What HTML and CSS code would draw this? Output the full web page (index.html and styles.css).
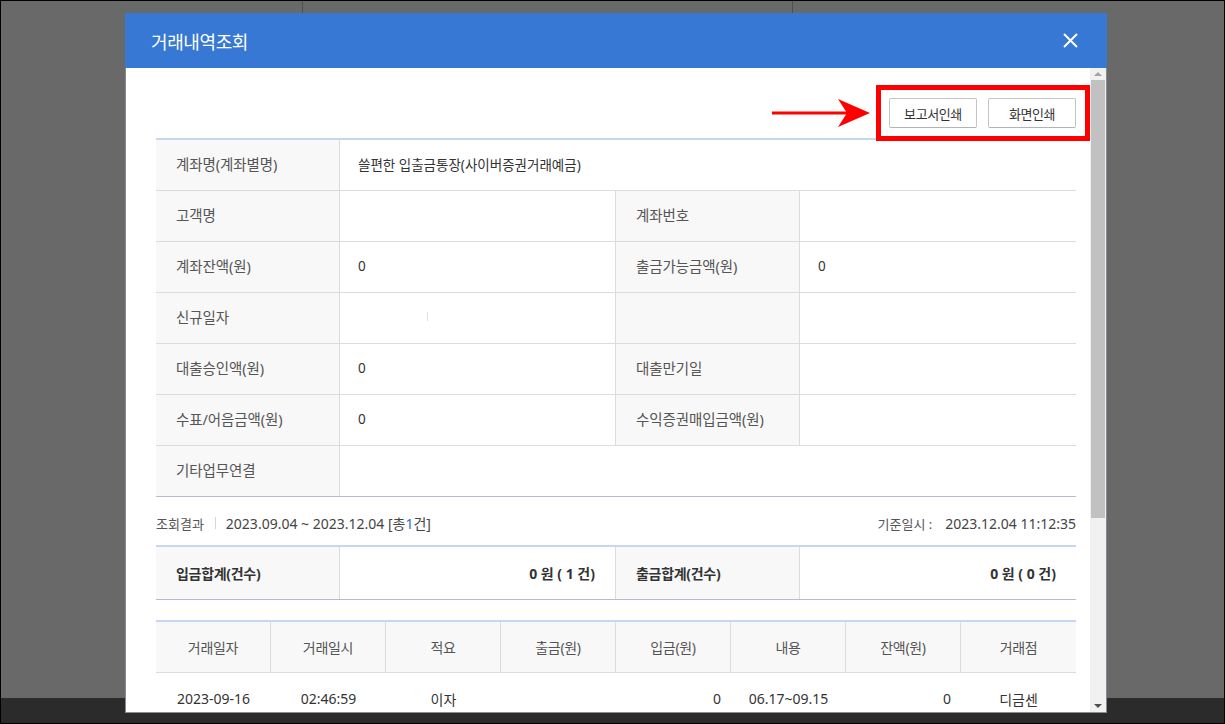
FILE: index.html
```html
<!DOCTYPE html>
<html lang="ko">
<head>
<meta charset="utf-8">
<title>거래내역조회</title>
<link rel="stylesheet" href="styles.css">
</head>
<body>
<div class="screen">
  <div class="bd-cols">
    <div class="bd-col"></div>
    <div class="bd-col"></div>
    <div class="bd-col"></div>
  </div>
  <div class="bd-bottom"></div>

  <div class="modal">
    <div class="modal-head">
      <h1 class="modal-title">거래내역조회</h1>
      <span class="close">
        <svg width="15" height="15" viewBox="0 0 15 15"><path d="M1 1L14 14M14 1L1 14" stroke="#fff" stroke-width="2" fill="none"/></svg>
      </span>
    </div>
    <div class="modal-body">
      <div class="content">
        <div class="btn-row">
          <svg class="annot-arrow" width="102" height="32" viewBox="0 0 102 32">
            <rect x="2" y="14.5" width="78" height="3" fill="#f00"/>
            <polygon points="68,2 100,16 68,30 77,16" fill="#f00"/>
          </svg>
          <span class="btn">보고서인쇄</span>
          <span class="btn">화면인쇄</span>
          <span class="annot-box"></span>
        </div>

        <div class="info">
          <div class="c th">계좌명(계좌별명)</div>
          <div class="c td span3 end">쓸편한 입출금통장(사이버증권거래예금)</div>

          <div class="c th">고객명</div>
          <div class="c td"></div>
          <div class="c th">계좌번호</div>
          <div class="c td end"></div>

          <div class="c th">계좌잔액(원)</div>
          <div class="c td">0</div>
          <div class="c th">출금가능금액(원)</div>
          <div class="c td end">0</div>

          <div class="c th">신규일자</div>
          <div class="c td"><span class="mark"></span></div>
          <div class="c th"></div>
          <div class="c td end"></div>

          <div class="c th">대출승인액(원)</div>
          <div class="c td">0</div>
          <div class="c th">대출만기일</div>
          <div class="c td end"></div>

          <div class="c th">수표/어음금액(원)</div>
          <div class="c td">0</div>
          <div class="c th">수익증권매입금액(원)</div>
          <div class="c td end"></div>

          <div class="c th lastrow">기타업무연결</div>
          <div class="c td span3 end lastrow"></div>
        </div>

        <div class="result">
          <div class="result-left">
            <span class="lbl">조회결과</span><span class="sep"></span><span class="val">2023.09.04 ~ 2023.12.04 [총<em>1</em>건]</span>
          </div>
          <div class="result-right">
            <span class="lbl">기준일시 :</span><span class="val stamp">2023.12.04 11:12:35</span>
          </div>
        </div>

        <div class="sum">
          <div class="s sth">입금합계(건수)</div>
          <div class="s std">0 원 ( 1 건)</div>
          <div class="s sth">출금합계(건수)</div>
          <div class="s std end">0 원 ( 0 건)</div>
        </div>

        <div class="tx">
          <div class="h">거래일자</div>
          <div class="h">거래일시</div>
          <div class="h">적요</div>
          <div class="h">출금(원)</div>
          <div class="h">입금(원)</div>
          <div class="h">내용</div>
          <div class="h">잔액(원)</div>
          <div class="h end">거래점</div>

          <div class="d">2023-09-16</div>
          <div class="d">02:46:59</div>
          <div class="d">이자</div>
          <div class="d num"></div>
          <div class="d num">0</div>
          <div class="d">06.17~09.15</div>
          <div class="d num">0</div>
          <div class="d">디금센</div>
        </div>
      </div>
      <div class="scrollbar">
        <span class="sb-btn"><span class="tri up"></span></span>
        <div class="sb-track"><div class="sb-thumb"></div></div>
        <span class="sb-btn"><span class="tri down"></span></span>
      </div>
    </div>
  </div>
</div>
</body>
</html>
```

FILE: styles.css
```css
* { box-sizing: border-box; }
html, body { margin: 0; padding: 0; }
body {
  width: 1225px;
  height: 724px;
  overflow: hidden;
  font-family: "Noto Sans", "Noto Sans CJK KR", sans-serif;
  background: #696969;
}
.screen {
  position: relative;
  width: 1225px;
  height: 724px;
  border: 1px solid #000;
  background: #696969;
  display: flex;
  flex-direction: column;
}
.bd-cols {
  flex: 1;
  display: grid;
  grid-template-columns: 302px 490px 1fr;
}
.bd-col { border-right: 1px solid #4f4f4f; }
.bd-col:last-child { border-right: none; }
.bd-bottom { height: 25px; background: #2b2b2b; }

/* modal */
.modal {
  position: absolute;
  left: 124px;
  top: 12px;
  width: 982px;
  height: 700px;
  background: #fff;
  border: 1px solid #868c95;
  border-top: none;
  display: flex;
  flex-direction: column;
}
.modal-head {
  height: 55px;
  margin: 0 -1px;
  background: #3678d3;
  display: flex;
  align-items: center;
  justify-content: space-between;
  padding: 0 29px 0 26px;
  flex: none;
}
.modal-title {
  margin: 0;
  font-size: 18px;
  font-weight: 400;
  color: #fff;
  letter-spacing: -0.4px;
}
.close { display: flex; width: 15px; height: 15px; }

.modal-body {
  flex: 1;
  min-height: 0;
  display: flex;
}
.content {
  flex: 1;
  min-width: 0;
  padding: 30px 14px 0 30px;
  overflow: hidden;
}

/* buttons */
.btn-row {
  position: relative;
  height: 30px;
  margin-bottom: 10px;
  display: flex;
  justify-content: flex-end;
  gap: 11px;
}
.btn {
  height: 30px;
  min-width: 88px;
  padding: 0 14px;
  border: 1px solid #c4c4c4;
  border-bottom-color: #b3b3b3;
  border-radius: 2px;
  background: #fff;
  font-size: 13px;
  letter-spacing: -0.4px;
  color: #333;
  display: flex;
  align-items: center;
  justify-content: center;
}
.annot-box {
  position: absolute;
  right: -14px;
  top: -13px;
  width: 214px;
  height: 56px;
  border: 5px solid #ff0000;
}
.annot-arrow {
  position: absolute;
  left: 614px;
  top: -1px;
}

/* info grid */
.info {
  display: grid;
  grid-template-columns: 184px 276px 184px 276px;
  border-top: 2px solid #c7d7ef;
  border-bottom: 1px solid #b6bbcf;
}
.c {
  height: 51px;
  padding-bottom: 3px;
  border-bottom: 1px solid #dcdcdc;
  border-right: 1px solid #dcdcdc;
  display: flex;
  align-items: center;
}
.c.end { border-right: none; }
.c.lastrow { border-bottom: none; height: 50px; }
.span3 { grid-column: span 3; }
.th {
  background: #f8f8f8;
  padding-left: 20px;
  font-size: 14.5px;
  letter-spacing: -0.1px;
  color: #555;
}
.td {
  padding-left: 18px;
  font-size: 13.5px;
  color: #333;
}
.mark {
  display: block;
  width: 1px;
  height: 9px;
  margin-left: 69px;
  background: #d3e5f6;
}

/* result line */
.result {
  height: 48px;
  padding-top: 4px;
  display: flex;
  justify-content: space-between;
  align-items: center;
}
.result-left, .result-right { display: flex; align-items: center; }
.lbl { font-size: 13px; color: #555; }
.sep { width: 1px; height: 12px; background: #d6d6d6; margin: 0 10px 0 11px; }
.val { font-size: 14px; color: #444; }
.val em { font-style: normal; color: #2f6bd0; }
.stamp { margin-left: 13px; }

/* summary */
.sum {
  display: grid;
  grid-template-columns: 184px 276px 184px 276px;
  border-top: 2px solid #c7d7ef;
  border-bottom: 1px solid #b6bbcf;
}
.s {
  height: 52px;
  display: flex;
  align-items: center;
  border-right: 1px solid #dcdcdc;
  font-size: 14px;
  font-weight: 700;
  color: #333;
}
.s.end { border-right: none; }
.sth { background: #f8f8f8; padding-left: 20px; letter-spacing: -0.3px; }
.std { justify-content: flex-end; padding-right: 20px; }

/* transactions */
.tx {
  margin-top: 20px;
  display: grid;
  grid-template-columns: repeat(8, 115px);
  border-top: 2px solid #c7d7ef;
}
.h {
  height: 51px;
  background: #f8f8f8;
  border-bottom: 1px solid #dcdcdc;
  border-right: 1px solid #dcdcdc;
  display: flex;
  align-items: center;
  justify-content: center;
  font-size: 14px;
  letter-spacing: -0.3px;
  color: #555;
}
.h.end { border-right: none; }
.d {
  height: 51px;
  display: flex;
  align-items: center;
  justify-content: center;
  font-size: 14px;
  color: #333;
}
.d.num { justify-content: flex-end; padding-right: 10px; }

/* scrollbar */
.scrollbar {
  width: 16px;
  flex: none;
  background: #f1f1f1;
  display: flex;
  flex-direction: column;
}
.sb-btn {
  height: 12px;
  flex: none;
  display: flex;
  align-items: center;
  justify-content: center;
}
.tri { width: 0; height: 0; border-left: 4px solid transparent; border-right: 4px solid transparent; }
.tri.up { border-bottom: 4px solid #a3a3a3; }
.tri.down { border-top: 4px solid #505050; }
.sb-track { flex: 1; padding: 0 1px; }
.sb-thumb { height: 438px; background: #c1c1c1; }
```
